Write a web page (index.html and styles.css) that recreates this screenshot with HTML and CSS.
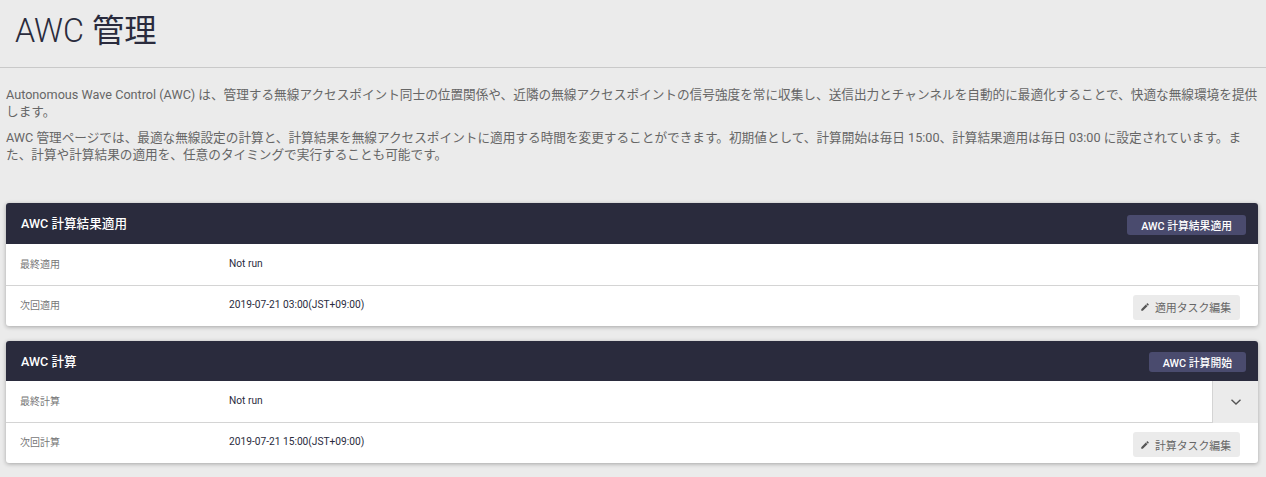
FILE: index.html
```
<!DOCTYPE html>
<html lang="ja">
<head>
<meta charset="utf-8">
<title>AWC 管理</title>
<link rel="stylesheet" href="styles.css">
</head>
<body>
<header class="page-head"><h1>AWC <span class="kanji">管理</span></h1></header>
<section class="intro">
<p>Autonomous Wave Control (AWC) は、管理する無線アクセスポイント同士の位置関係や、近隣の無線アクセスポイントの信号強度を常に収集し、送信出力とチャンネルを自動的に最適化することで、快適な無線環境を提供します。</p>
<p>AWC 管理ページでは、最適な無線設定の計算と、計算結果を無線アクセスポイントに適用する時間を変更することができます。初期値として、計算開始は毎日 15:00、計算結果適用は毎日 03:00 に設定されています。また、計算や計算結果の適用を、任意のタイミングで実行することも可能です。</p>
</section>
<section class="card first">
<div class="card-head"><h2>AWC 計算結果適用</h2><button class="primary">AWC 計算結果適用</button></div>
<div class="row line"><span class="label">最終適用</span><span class="value">Not run</span></div>
<div class="row"><span class="label">次回適用</span><span class="value">2019-07-21 03:00(JST+09:00)</span>
<button class="edit"><svg viewBox="0 0 24 24" class="pencil"><path d="M3 17.25V21h3.75L17.81 9.94l-3.75-3.75L3 17.25zM20.71 7.04a1 1 0 0 0 0-1.41l-2.34-2.34a1 1 0 0 0-1.41 0l-1.83 1.83 3.75 3.75 1.83-1.83z"/></svg>適用タスク編集</button></div>
</section>
<section class="card">
<div class="card-head"><h2>AWC 計算</h2><button class="primary">AWC 計算開始</button></div>
<div class="row-wrap">
<div class="row line grow"><span class="label">最終計算</span><span class="value">Not run</span></div>
<div class="toggle"><svg viewBox="0 0 12 8" class="chev"><path d="M1.5 1.8 6 6l4.5-4.2"/></svg></div>
</div>
<div class="row"><span class="label">次回計算</span><span class="value">2019-07-21 15:00(JST+09:00)</span>
<button class="edit"><svg viewBox="0 0 24 24" class="pencil"><path d="M3 17.25V21h3.75L17.81 9.94l-3.75-3.75L3 17.25zM20.71 7.04a1 1 0 0 0 0-1.41l-2.34-2.34a1 1 0 0 0-1.41 0l-1.83 1.83 3.75 3.75 1.83-1.83z"/></svg>計算タスク編集</button></div>
</section>
</body>
</html>
```
FILE: styles.css
```
* { box-sizing: border-box; }
html, body { margin: 0; padding: 0; }
body {
  background: #ebebeb;
  font-family: Roboto, "Noto Sans CJK JP", sans-serif;
  color: #666;
  height: 477px;
  overflow: hidden;
}
.page-head {
  height: 68px;
  padding: 10px 15px 0;
  border-bottom: 1px solid #c9c9c9;
}
h1 {
  margin: 0;
  font-size: 32.3px;
  line-height: 42px;
  font-weight: 300;
  color: #2a2b3d;
}
.kanji { font-weight: 400; }
.intro {
  padding: 18px 6px 0;
  font-size: 12.65px;
  line-height: 17px;
}
.intro p { margin: 0 0 9px; }
.card {
  margin: 15px 8px 0 6px;
  background: #fff;
  border-radius: 3px;
  box-shadow: 0 1px 4px rgba(0,0,0,.3);
}
.card.first { margin-top: 40.3px; }
.card-head {
  height: 40.5px;
  background: #2a2b3d;
  border-radius: 3px 3px 0 0;
  padding: 0 12px 0 15px;
  display: flex;
  align-items: center;
  justify-content: space-between;
}
h2 {
  margin: 0 0 2px;
  font-size: 12.6px;
  font-weight: 500;
  color: #fff;
}
.primary {
  height: 20px;
  margin-top: 2.4px;
  padding: 0 14px;
  border: 0;
  border-radius: 3px;
  background: #4a4b6e;
  color: #fff;
  font: 500 10.8px Roboto, "Noto Sans CJK JP", sans-serif;
}
.row {
  height: 40px;
  display: flex;
  align-items: center;
  padding: 0 18px 3px 14px;
  font-size: 10px;
}
.row.line {
  height: 42px;
  padding-bottom: 2px;
  border-bottom: 1px solid #d4d4d4;
}
.label { width: 209px; color: #777; }
.value { color: #2a2b3d; font-size: 10.2px; }
.edit {
  margin-left: auto;
  margin-top: 6px;
  height: 25px;
  width: 107px;
  border: 0;
  border-radius: 3px;
  background: #ebebeb;
  color: #666;
  font: 400 10.9px Roboto, "Noto Sans CJK JP", sans-serif;
  display: flex;
  align-items: center;
  justify-content: center;
  gap: 5px;
  padding: 0 2px 0 0;
}
.pencil { width: 10px; height: 10px; fill: #555; }
.row-wrap { display: flex; }
.grow { flex: 1; }
.toggle {
  width: 46px;
  height: 42px;
  background: #ebebeb;
  border-left: 1px solid #d4d4d4;
  display: flex;
  align-items: center;
  justify-content: center;
}
.chev { width: 12px; height: 8px; fill: none; stroke: #555; stroke-width: 1.4; }
```
